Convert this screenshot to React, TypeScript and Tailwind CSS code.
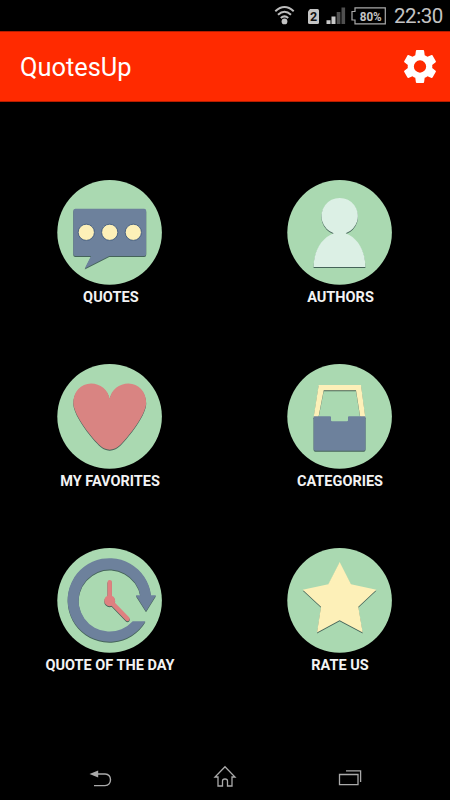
import type { ReactNode } from "react";

const SHADOW = "drop-shadow-[0_1px_0.6px_rgba(35,60,60,0.75)]";

function Tile({ label, textClass, children }: { label: string; textClass: string; children: ReactNode }) {
  return (
    <button className="flex h-[184px] w-[230px] flex-col items-center">
      <svg className="h-[105px] w-[105px] shrink-0" viewBox="0 0 105 105">
        <circle cx="52.6" cy="52.4" r="52.3" fill="#aad9b1" />
        {children}
      </svg>
      <span className={`mt-[4px] h-[18px] whitespace-nowrap text-[14.5px] leading-[18px] font-bold text-[#f3f3f3] ${textClass}`}>
        {label}
      </span>
    </button>
  );
}

function StatusBar() {
  return (
    <div className="flex h-[31px] shrink-0 items-center justify-end text-[#c0c0c0]">
      <svg className="h-[31px] w-[125px]" viewBox="265 0 125 31" fill="none">
        <g stroke="#bdbdbd" strokeWidth="2">
          <path d="M275.3 11.2Q284.5 2.9 293.7 11.2" />
          <path d="M278 14.8Q284.5 8.7 291 14.8" />
          <path d="M280.8 18Q284.5 14.7 288.2 18" />
        </g>
        <circle cx="284.5" cy="21.4" r="2.9" fill="#c4c4c4" />
        <path d="M310 9h7.5q1.5 0 1.5 1.5v12q0 1.5-1.5 1.5h-8q-1.5 0-1.5-1.5V11.5z" fill="#c4c4c4" />
        <text x="313.5" y="21.2" textAnchor="middle" fontSize="12.5" fontWeight="700" fill="#111">2</text>
        <path d="M326.5 20.3h4V24h-4zM331.5 16.5h4V24h-4z" fill="#c9c9c9" />
        <path d="M336.7 12h3.7v12h-3.7zM341.5 7.5h3.6V24h-3.6z" fill="#505050" />
        <path d="M355 7.8H385.3V23.8H355V20H352V11.5H355Z" stroke="#a9a9a9" strokeWidth="1.2" />
        <text x="370.7" y="20.5" textAnchor="middle" fontSize="12.5" fontWeight="700" fill="#c4c4c4" textLength="22" lengthAdjust="spacingAndGlyphs">80%</text>
      </svg>
      <span className="ml-1 w-[56px] pt-[2px] text-[20.5px] leading-[31px] tracking-[-0.45px] text-[#c4c4c4]">22:30</span>
    </div>
  );
}

function Header() {
  return (
    <header className="flex h-[71px] shrink-0 items-center justify-between border-y border-[#b51d00] bg-[#ff2a00] pr-[13px] pl-5">
      <h1 className="text-[25.4px] leading-[34px] text-white">QuotesUp</h1>
      <svg className="h-[41px] w-[34px]" viewBox="2.2 0 19.6 24" fill="#fff">
        <path d="M19.14 12.94c.04-.3.06-.61.06-.94 0-.32-.02-.64-.07-.94l2.03-1.58c.18-.14.23-.41.12-.61l-1.92-3.32c-.12-.22-.37-.29-.59-.22l-2.39.96c-.5-.38-1.03-.7-1.62-.94L14.4 2.81c-.04-.24-.24-.41-.48-.41h-3.84c-.24 0-.43.17-.47.41L9.25 5.35c-.59.24-1.13.57-1.62.94l-2.39-.96c-.22-.08-.47 0-.59.22L2.74 8.87c-.12.21-.08.47.12.61l2.03 1.58c-.05.3-.09.63-.09.94s.02.64.07.94l-2.03 1.58c-.18.14-.23.41-.12.61l1.92 3.32c.12.22.37.29.59.22l2.39-.96c.5.38 1.03.7 1.62.94l.36 2.54c.05.24.24.41.48.41h3.84c.24 0 .44-.17.47-.41l.36-2.54c.59-.24 1.13-.56 1.62-.94l2.39.96c.22.08.47 0 .59-.22l1.92-3.32c.12-.22.07-.47-.12-.61zM12 15.6a3.6 3.6 0 1 1 0-7.2 3.6 3.6 0 0 1 0 7.2z" />
      </svg>
    </header>
  );
}

function NavBar() {
  return (
    <nav className="flex h-[46px] shrink-0 items-center justify-between px-[88px]">
      <svg className="h-[20px] w-[24px]" viewBox="88 767 24 20" fill="none">
        <path d="M96 774H105.2C112.3 774 112.3 785.6 105 785.6H94" stroke="#aaa" strokeWidth="1.4" />
        <path d="M89.5 774l8.7-3.4v6.8z" fill="#aaa" />
      </svg>
      <svg className="h-[24px] w-[24px]" viewBox="213 765 24 24" fill="none" stroke="#aaa" strokeWidth="1.3">
        <path d="M225 766.8L235 777H232V786H227.5V781Q227.5 779 225 779T222.5 781V786H218V777H215Z" />
      </svg>
      <svg className="h-[20px] w-[24px]" viewBox="338 768 24 20" fill="none" stroke="#aaa" strokeWidth="1.3">
        <path d="M339.5 775.5H358V785.7H339.5ZM346 771.9H360.6V783" />
      </svg>
    </nav>
  );
}

export default function App() {
  return (
    <div className="flex h-[800px] w-[450px] flex-col overflow-hidden bg-black font-['Roboto',sans-serif]">
      <StatusBar />
      <Header />
      <main className="grid flex-1 grid-cols-[230px_230px] content-start pt-[78px] -ml-[5.5px]">
        <Tile label="QUOTES" textClass="tracking-[0.1px] pl-[3px]">
          <g className={SHADOW}>
            <path d="M18.3 28.8H87.2Q89.2 28.8 89.2 30.8V74Q89.2 76 87.2 76H52.3L27.7 88.6L34 76H18.3Q16.3 76 16.3 74V30.8Q16.3 28.8 18.3 28.8Z" fill="#6d819c" />
          </g>
          <g fill="#fdf0b8" stroke="#34517a" strokeWidth="0.8">
            <circle cx="29.3" cy="52.3" r="8.1" />
            <circle cx="52.7" cy="52.3" r="8.1" />
            <circle cx="76.3" cy="52.3" r="8.1" />
          </g>
        </Tile>
        <Tile label="AUTHORS" textClass="pl-[2px]">
          <g className={SHADOW}>
            <path d="M46.7 53.3A18.2 18.2 0 1 1 58.7 53.3C71 58 78.4 71 78.4 87H26.6C26.6 71 34.5 58 46.7 53.3Z" fill="#dcf0e5" />
          </g>
        </Tile>
        <Tile label="MY FAVORITES" textClass="pl-px">
          <g className={SHADOW}>
            <path d="M52.7 34.7C51 26 43.5 19.6 34 19.6C24 19.6 16.3 28 16.3 38.7C16.3 49 30 68 40 78.5C45 84 49 85.7 52.7 85.7S60.5 84 65.5 78.5C75.5 68 89.2 49 89.2 38.7C89.2 28 81.5 19.6 71.5 19.6C62 19.6 54.4 26 52.7 34.7Z" fill="#d98482" />
          </g>
        </Tile>
        <Tile label="CATEGORIES" textClass="pl-px">
          <g className={SHADOW}>
            <path fillRule="evenodd" d="M31.7 21H74L78.4 54H73.4L69 26.2H36.7L31.3 54H26.5Z" fill="#fdf0b8" />
            <path d="M27.3 52.3H43Q44 52.3 44 53.3V56.3Q44 57.3 45 57.3H60Q61 57.3 61 56.3V53.3Q61 52.3 62 52.3H77.8Q78.5 52.3 78.5 53V85Q78.5 86.7 76.8 86.7H28.3Q26.6 86.7 26.6 85V53Q26.6 52.3 27.3 52.3Z" fill="#6d819c" />
          </g>
        </Tile>
        <Tile label="QUOTE OF THE DAY" textClass="pl-px">
          <g className={SHADOW}>
            <path d="M88.4 73.3A41.8 41.8 0 1 1 94 47.3H99L89 63.3L78.8 47.3H83.2A31 31 0 1 0 75.7 73.3Z" fill="#6d819c" />
          </g>
          <g className={SHADOW} stroke="#df8080" strokeLinecap="round" strokeWidth="4.5">
            <path d="M52.7 34.2V52.7L70.5 70.8" fill="none" />
            <circle cx="52.7" cy="52.7" r="3.2" fill="#df8080" />
          </g>
        </Tile>
        <Tile label="RATE US" textClass="pl-px">
          <g className={SHADOW}>
            <path d="M52.7 14L64 36.2L89.4 41.7L71.3 58.7L75.7 84.6L52.6 72.3L30 84.6L34 58.7L15.7 41.7L41.3 36.2Z" fill="#fdf0b8" />
          </g>
        </Tile>
      </main>
      <NavBar />
    </div>
  );
}
